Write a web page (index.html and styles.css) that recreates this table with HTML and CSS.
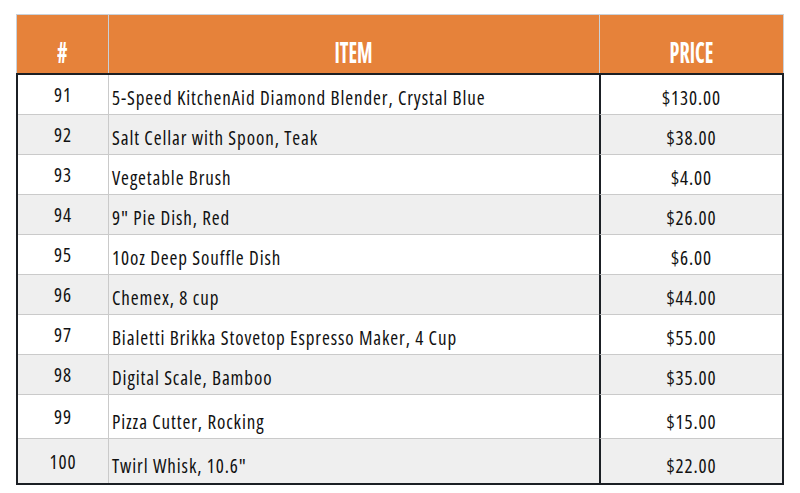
FILE: index.html
```html
<!DOCTYPE html>
<html>
<head>
<meta charset="utf-8">
<link rel="stylesheet" href="styles.css">
</head>
<body>
<div class="table">
  <div class="head">
    <div class="hcell"><span class="htext">#</span></div>
    <div class="hcell"><span class="htext">ITEM</span></div>
    <div class="hcell last"><span class="htext">PRICE</span></div>
  </div>
  <div class="body">
    <div class="row"><div class="num">91</div><div class="item">5-Speed KitchenAid Diamond Blender, Crystal Blue</div><div class="price">$130.00</div></div>
    <div class="row alt"><div class="num">92</div><div class="item">Salt Cellar with Spoon, Teak</div><div class="price">$38.00</div></div>
    <div class="row"><div class="num">93</div><div class="item">Vegetable Brush</div><div class="price">$4.00</div></div>
    <div class="row alt"><div class="num">94</div><div class="item">9" Pie Dish, Red</div><div class="price">$26.00</div></div>
    <div class="row"><div class="num">95</div><div class="item">10oz Deep Souffle Dish</div><div class="price">$6.00</div></div>
    <div class="row alt"><div class="num">96</div><div class="item">Chemex, 8 cup</div><div class="price">$44.00</div></div>
    <div class="row"><div class="num">97</div><div class="item">Bialetti Brikka Stovetop Espresso Maker, 4 Cup</div><div class="price">$55.00</div></div>
    <div class="row alt"><div class="num">98</div><div class="item">Digital Scale, Bamboo</div><div class="price">$35.00</div></div>
    <div class="row tall"><div class="num">99</div><div class="item">Pizza Cutter, Rocking</div><div class="price">$15.00</div></div>
    <div class="row alt tall lastrow"><div class="num">100</div><div class="item">Twirl Whisk, 10.6"</div><div class="price">$22.00</div></div>
  </div>
</div>
</body>
</html>
```
FILE: styles.css
```css
* { box-sizing: border-box; }
body {
  margin: 0;
  background: #ffffff;
  font-family: "Open Sans", "Liberation Sans", sans-serif;
  color: #111111;
}
.table {
  width: 768px;
  margin: 14px 0 0 16px;
}
.head {
  display: grid;
  grid-template-columns: 92px 491px 185px;
  height: 59px;
  background: #e6823a;
  border-top: 1px solid #c9d1d9;
}
.hcell {
  display: flex;
  align-items: flex-end;
  justify-content: center;
  border-left: 1px solid #c9d1d9;
  padding-bottom: 7px;
}
.hcell.last { border-right: 1px solid #c9d1d9; }
.htext {
  display: inline-block;
  color: #ffffff;
  font-family: "Open Sans", "Liberation Sans", sans-serif;
  font-weight: 700;
  font-stretch: 75%;
  font-size: 28px;
  line-height: 28px;
  transform: scaleX(0.72);
}
.body {
  border: 2px solid #1b1f24;
}
.row {
  display: grid;
  grid-template-columns: 91px 490px 183px;
  height: 40px;
  background: #ffffff;
  font-size: 19px;
  font-weight: 500;
  font-stretch: 75%;
  letter-spacing: 0.9px;
  line-height: 24px;
}
.row.alt { background: #efefef; }
.row.tall { height: 44px; }
.row > div { border-bottom: 1px solid #cacaca; }
.row.lastrow > div { border-bottom: 0; }
.num {
  display: flex;
  align-items: center;
  justify-content: center;
  border-right: 1px solid #cacaca;
  padding-top: 1px;
}
.item {
  display: flex;
  align-items: flex-end;
  padding: 0 0 4px 3px;
  white-space: nowrap;
}
.price {
  display: flex;
  align-items: flex-end;
  justify-content: center;
  padding-bottom: 4px;
  border-left: 2px solid #1b1f24;
}
.row.lastrow .item, .row.lastrow .price { padding-bottom: 5px; }
```
